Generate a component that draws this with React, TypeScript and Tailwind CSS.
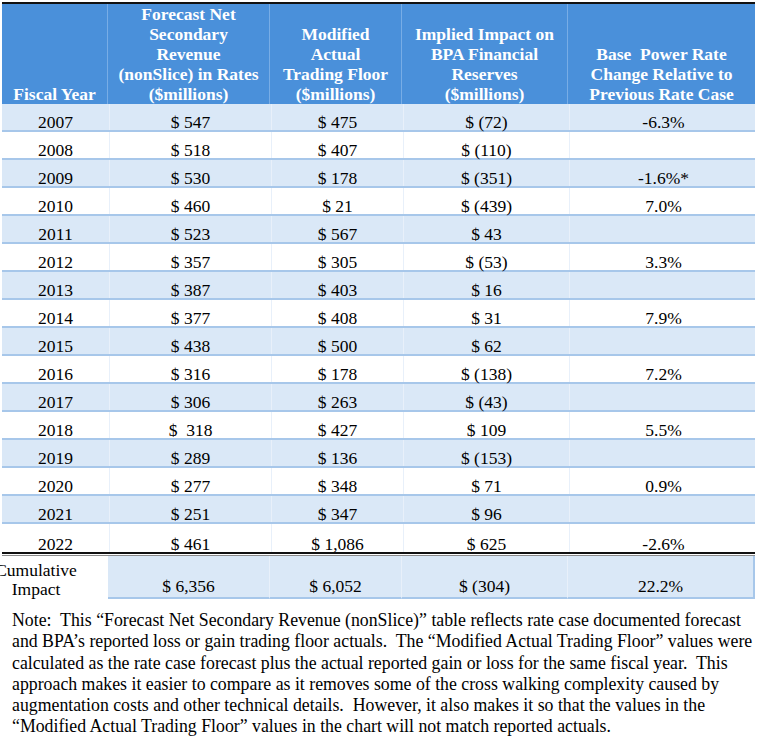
import React from "react";

const rows: [string, string, string, string, string][] = [
  ["2007", "$ 547", "$ 475", "$ (72)", "-6.3%"],
  ["2008", "$ 518", "$ 407", "$ (110)", ""],
  ["2009", "$ 530", "$ 178", "$ (351)", "-1.6%*"],
  ["2010", "$ 460", "$ 21", "$ (439)", "7.0%"],
  ["2011", "$ 523", "$ 567", "$ 43", ""],
  ["2012", "$ 357", "$ 305", "$ (53)", "3.3%"],
  ["2013", "$ 387", "$ 403", "$ 16", ""],
  ["2014", "$ 377", "$ 408", "$ 31", "7.9%"],
  ["2015", "$ 438", "$ 500", "$ 62", ""],
  ["2016", "$ 316", "$ 178", "$ (138)", "7.2%"],
  ["2017", "$ 306", "$ 263", "$ (43)", ""],
  ["2018", "$  318", "$ 427", "$ 109", "5.5%"],
  ["2019", "$ 289", "$ 136", "$ (153)", ""],
  ["2020", "$ 277", "$ 348", "$ 71", "0.9%"],
  ["2021", "$ 251", "$ 347", "$ 96", ""],
  ["2022", "$ 461", "$ 1,086", "$ 625", "-2.6%"],
];

const headers: string[][] = [
  ["Fiscal Year"],
  ["Forecast Net", "Secondary", "Revenue", "(nonSlice) in Rates", "($millions)"],
  ["Modified", "Actual", "Trading Floor", "($millions)"],
  ["Implied Impact on", "BPA Financial", "Reserves", "($millions)"],
  ["Base  Power Rate", "Change Relative to", "Previous Rate Case"],
];

const grid = "grid grid-cols-[106px_162px_132px_166px_187px]";

export default function App() {
  return (
    <div
      className="w-[758px] h-[737px] bg-white overflow-hidden pt-[2px] text-black"
      style={{ fontFamily: '"Liberation Serif", "Times New Roman", serif' }}
    >
      <div className="ml-[2px] w-[753px]">
        {/* header */}
        <div className={`${grid} h-[102px] bg-[#4a90da] border-t-2 border-[#111]`}>
          {headers.map((h, i) => (
            <div
              key={i}
              className={`flex flex-col justify-end items-center text-white font-bold text-[17.5px] leading-[20px] whitespace-pre ${
                i < 4 ? "border-r border-[#78ade6]" : ""
              }`}
            >
              {h.map((l, j) => (
                <div key={j}>{l}</div>
              ))}
            </div>
          ))}
        </div>
        {/* body */}
        <div className="border-l-2 border-r-2 border-[#a7c7ea]">
          {rows.map((r, i) => (
            <div
              key={i}
              className={`${grid} -mr-[2px] -ml-[2px] pl-[2px] h-[28px] ${
                i % 2 === 0 ? "bg-[#dae8f7]" : "bg-white"
              } ${i < rows.length - 1 ? "border-b-2 border-[#a7c7ea]" : ""}`}
            >
              {r.map((c, j) => (
                <div
                  key={j}
                  className={`flex items-end justify-center text-[17.5px] leading-[16px] whitespace-pre ${
                    j < 4 ? "border-r border-[#e8f0fa]" : ""
                  } ${j === 0 ? "-ml-[2px]" : ""}`}
                >
                  {c}
                </div>
              ))}
            </div>
          ))}
        </div>
        {/* double line */}
        <div className="h-[2px] bg-[#111]" />
        <div className="h-[1px] bg-white" />
        <div className="h-[1px] bg-[#8a8a8a]" />
        {/* cumulative */}
        <div className={`${grid} h-[43px]`}>
          <div className="relative bg-white">
            <div className="absolute -left-[12px] top-[5px] w-[92px] text-center text-[17.5px] leading-[19px]">
              Cumulative
              <br />
              Impact
            </div>
          </div>
          {["$ 6,356", "$ 6,052", "$ (304)", "22.2%"].map((v, i) => (
            <div
              key={i}
              className={`bg-[#dae8f7] border-b-2 border-[#a7c7ea] flex items-end justify-center pb-[3px] text-[17.5px] leading-[16px] ${
                i < 3 ? "border-r border-r-[#e8f0fa]" : "border-r-2 border-r-[#a7c7ea]"
              }`}
            >
              {v}
            </div>
          ))}
        </div>
      </div>
      {/* note */}
      <div className="mt-[11px] pl-[12px] text-[17.8px] leading-[21.3px] whitespace-pre">
        <div>{"Note:  This \u201cForecast Net Secondary Revenue (nonSlice)\u201d table reflects rate case documented forecast"}</div>
        <div>{"and BPA\u2019s reported loss or gain trading floor actuals.  The \u201cModified Actual Trading Floor\u201d values were"}</div>
        <div>{"calculated as the rate case forecast plus the actual reported gain or loss for the same fiscal year.  This"}</div>
        <div>{"approach makes it easier to compare as it removes some of the cross walking complexity caused by"}</div>
        <div>{"augmentation costs and other technical details.  However, it also makes it so that the values in the"}</div>
        <div>{"\u201cModified Actual Trading Floor\u201d values in the chart will not match reported actuals."}</div>
      </div>
    </div>
  );
}
